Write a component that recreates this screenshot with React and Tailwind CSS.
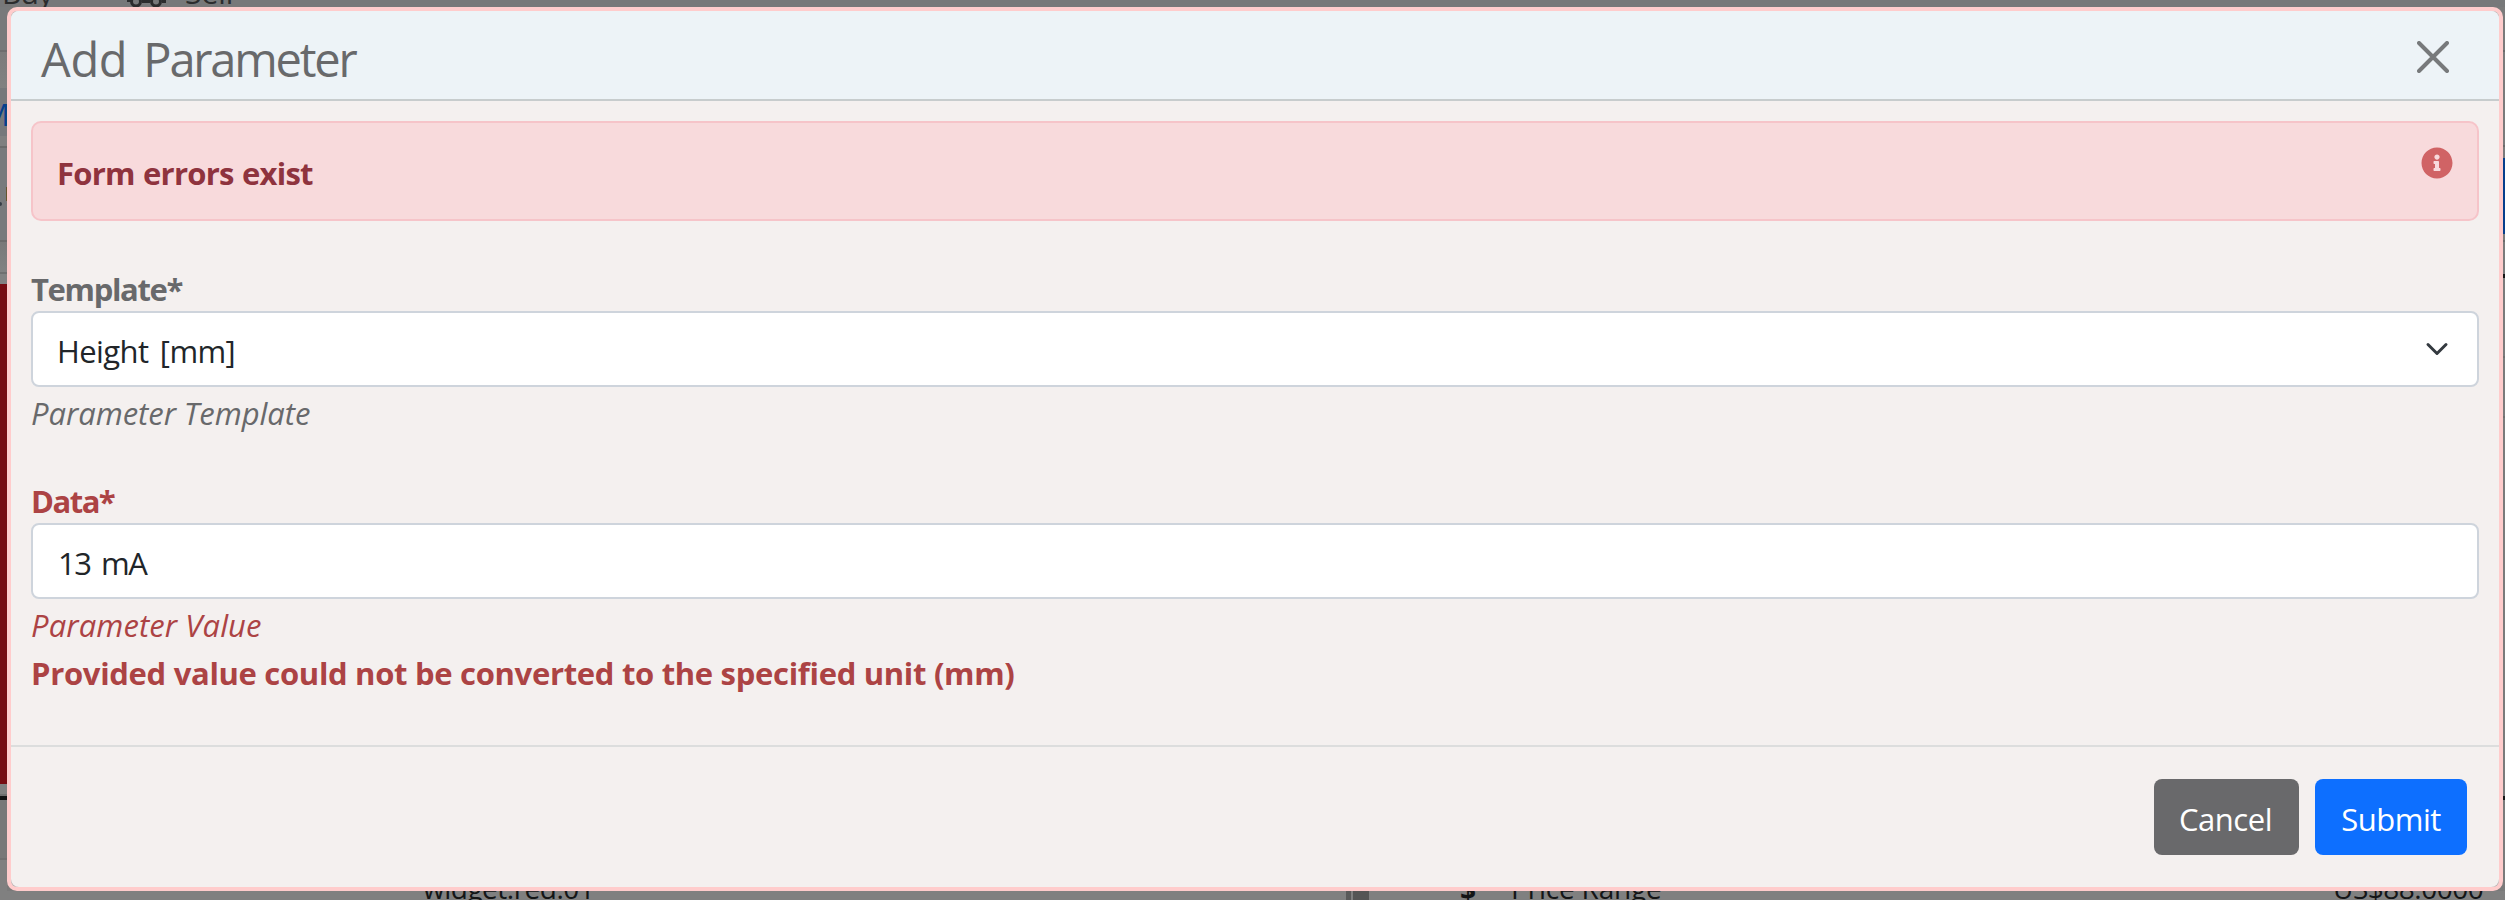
import React from 'react';
import { FaInfoCircle } from 'react-icons/fa';

function PageTop() {
  return (
    <div className="flex h-[7px] items-end overflow-hidden bg-[#777879] text-[30px] leading-[29px] text-[#2b2c2d]">
      <span className="ml-[2px] w-[123px] tracking-[-0.8px]">Buy</span>
      <svg className="w-[42px] shrink-0" height="40" viewBox="0 0 42 40" fill="none" stroke="#2b2c2d" strokeWidth="3">
        <path d="M2 33H6M17 34H25M37 34H41" strokeWidth="4" />
        <circle cx="11" cy="34.5" r="4.5" />
        <circle cx="31" cy="34.5" r="4.5" />
      </svg>
      <span className="ml-[18px]">Sell</span>
    </div>
  );
}

function PageLeft() {
  return (
    <div className="flex w-[7px] shrink-0 flex-col overflow-hidden">
      <div className="h-[43px] bg-[#787a7b]" />
      <div className="h-[2px] bg-[#6d6d6e]" />
      <div className="h-[36px] bg-linear-to-b from-[#7b7b7b] to-[#818181]" />
      <div className="flex h-[48px] items-center justify-end bg-[#76787b] text-[31px] text-[#063f8c]">
        <span className="mt-[5px] mr-[-3px]">M</span>
      </div>
      <div className="h-[10px] bg-[#808080]" />
      <div className="h-[2px] bg-[#6b6b6b]" />
      <div className="flex h-[92px] items-center bg-[#797a7c]">
        <div className="mt-[20px] -ml-[2px] size-[4px] shrink-0 rounded-r-full bg-[#363b45]" />
        <div className="ml-[4px] h-[14px] w-[1px] bg-[#66552d]" />
      </div>
      <div className="h-[2px] bg-[#6b6b6b]" />
      <div className="h-[30px] bg-linear-to-b from-[#797979] to-[#828282]" />
      <div className="h-[2px] bg-[#707070]" />
      <div className="h-[10px] bg-[#828282]" />
      <div className="h-[500px] bg-[#770c12]" />
      <div className="h-[10px] bg-[#808080]" />
      <div className="h-[2px] bg-[#6f6f6f]" />
      <div className="h-[4px] bg-[#111213]" />
      <div className="h-[58px] bg-[#787878]" />
      <div className="h-[2px] bg-[#707070]" />
      <div className="grow bg-[#808080]" />
    </div>
  );
}

function PageRight() {
  return (
    <div className="flex w-[2px] shrink-0 flex-col bg-[#7b7b7b]">
      <div className="h-[43px]" />
      <div className="h-[2px] bg-[#6a6a6a]" />
      <div className="h-[93px]" />
      <div className="h-[2px] bg-[#6a6a6a]" />
      <div className="h-[11px]" />
      <div className="h-[76px] bg-[#063f8c]" />
      <div className="h-[6px]" />
      <div className="h-[2px] bg-[#6a6a6a]" />
      <div className="h-[32px]" />
      <div className="h-[4px] bg-[#151616]" />
      <div className="h-[78px]" />
      <div className="h-[2px] bg-[#707070]" />
      <div className="h-[58px]" />
      <div className="h-[2px] bg-[#707070]" />
      <div className="h-[378px]" />
      <div className="h-[4px] bg-[#151616]" />
    </div>
  );
}

function PageBottom() {
  return (
    <div className="flex h-[9px] items-end overflow-hidden bg-[#808080] text-[28px] leading-[23px] text-[#141516]">
      <span className="ml-[423px] w-[923px] tracking-[-0.5px]">widget.red.01</span>
      <div className="h-[9px] w-[5px] bg-[#5a5a5a]" />
      <div className="ml-[2px] h-[9px] w-[16px] bg-[#555555]" />
      <span className="ml-[91px] w-[51px] font-bold leading-[21px]">$</span>
      <span className="w-[822px] tracking-[-0.2px]">Price Range</span>
      <span className="tracking-[-0.5px]">US$88.0000</span>
    </div>
  );
}

export default function App() {
  return (
    <div className="flex h-[900px] w-[2505px] flex-col overflow-hidden bg-[#7a7a7a] font-['Open_Sans',sans-serif] text-[31px]">
      <PageTop />
      <div className="flex h-[884px]">
        <PageLeft />
        <div className="h-[884px] min-w-0 grow rounded-[10px] bg-[#ffcccc] p-[4px]">
          <div className="h-full rounded-[6px] bg-[#b9b5b5]">
            <div className="flex h-full flex-col overflow-hidden rounded-[8px] bg-[#f4f0ef]">
              <header className="flex h-[90px] shrink-0 items-center justify-between border-b-2 border-[#c7cccd] bg-[#edf3f7] pr-[50px] pl-[30px]">
                <h1 className="pt-[8px] text-[47px] leading-[60px] tracking-[-2.2px] text-[#68696b] [word-spacing:6px]">
                  <span className="tracking-[-0.3px]">Add</span> Parameter
                </h1>
                <button type="button" aria-label="Close" className="mt-[4px]">
                  <svg width="32" height="32" viewBox="0 0 32 32" fill="none" stroke="#77797b" strokeWidth="4" strokeLinecap="round">
                    <path d="M2 2L30 30M30 2L2 30" />
                  </svg>
                </button>
              </header>
              <main className="flex grow flex-col px-[20px] pt-[20px]">
                <div className="flex h-[100px] shrink-0 justify-between rounded-[10px] border-2 border-[#f6c4c9] bg-[#f8dadc] px-[24px]">
                  <strong className="pt-[2px] leading-[96px] font-bold tracking-[-0.75px] text-[#8f333e] [word-spacing:1px]">Form errors exist</strong>
                  <FaInfoCircle className="mt-[24px] size-[32px] text-[#d06365]" />
                </div>
                <label className="mt-[46px] leading-[44px] font-bold tracking-[-1.35px] text-[#68696b]">Template*</label>
                <div className="flex h-[76px] shrink-0 items-center justify-between rounded-[8px] border-2 border-[#ced4dc] bg-white pr-[28px] pl-[24px]">
                  <span className="pt-[4px] leading-[44px] tracking-[-0.6px] text-[#212529] [word-spacing:4px]">Height [mm]</span>
                  <svg width="24" height="24" viewBox="0 0 16 16" fill="none" stroke="#343a40" strokeWidth="2" strokeLinecap="round" strokeLinejoin="round">
                    <path d="m2 5 6 6 6-6" />
                  </svg>
                </div>
                <em className="mt-[4px] leading-[44px] tracking-[-0.04px] text-[#68696b] italic">Parameter Template</em>
                <label className="mt-[44px] leading-[44px] font-bold tracking-[-1.5px] text-[#ac4344]">Data*</label>
                <div className="flex h-[76px] shrink-0 items-center rounded-[8px] border-2 border-[#ced4dc] bg-white pl-[25px]">
                  <span className="pt-[4px] leading-[44px] tracking-[-1.5px] text-[#212529] [word-spacing:4px]">13 mA</span>
                </div>
                <em className="mt-[4px] leading-[44px] tracking-[0.11px] text-[#ac4344] italic">Parameter Value</em>
                <strong className="mt-[4px] leading-[44px] font-bold tracking-[-0.31px] text-[#ac4344]">
                  Provided value could not be converted to the specified unit (mm)
                </strong>
              </main>
              <footer className="flex h-[142px] shrink-0 justify-end gap-[16px] border-t-2 border-[#dcdddd] pt-[32px] pr-[32px]">
                <button type="button" className="h-[76px] w-[145px] rounded-[8px] bg-[#69696b] pt-[4px] pr-[2px] leading-[44px] tracking-[-0.45px] text-white">
                  Cancel
                </button>
                <button type="button" className="h-[76px] w-[152px] rounded-[8px] bg-[#0d6fff] pt-[4px] leading-[44px] tracking-[-0.5px] text-white">
                  Submit
                </button>
              </footer>
            </div>
          </div>
        </div>
        <PageRight />
      </div>
      <PageBottom />
    </div>
  );
}
